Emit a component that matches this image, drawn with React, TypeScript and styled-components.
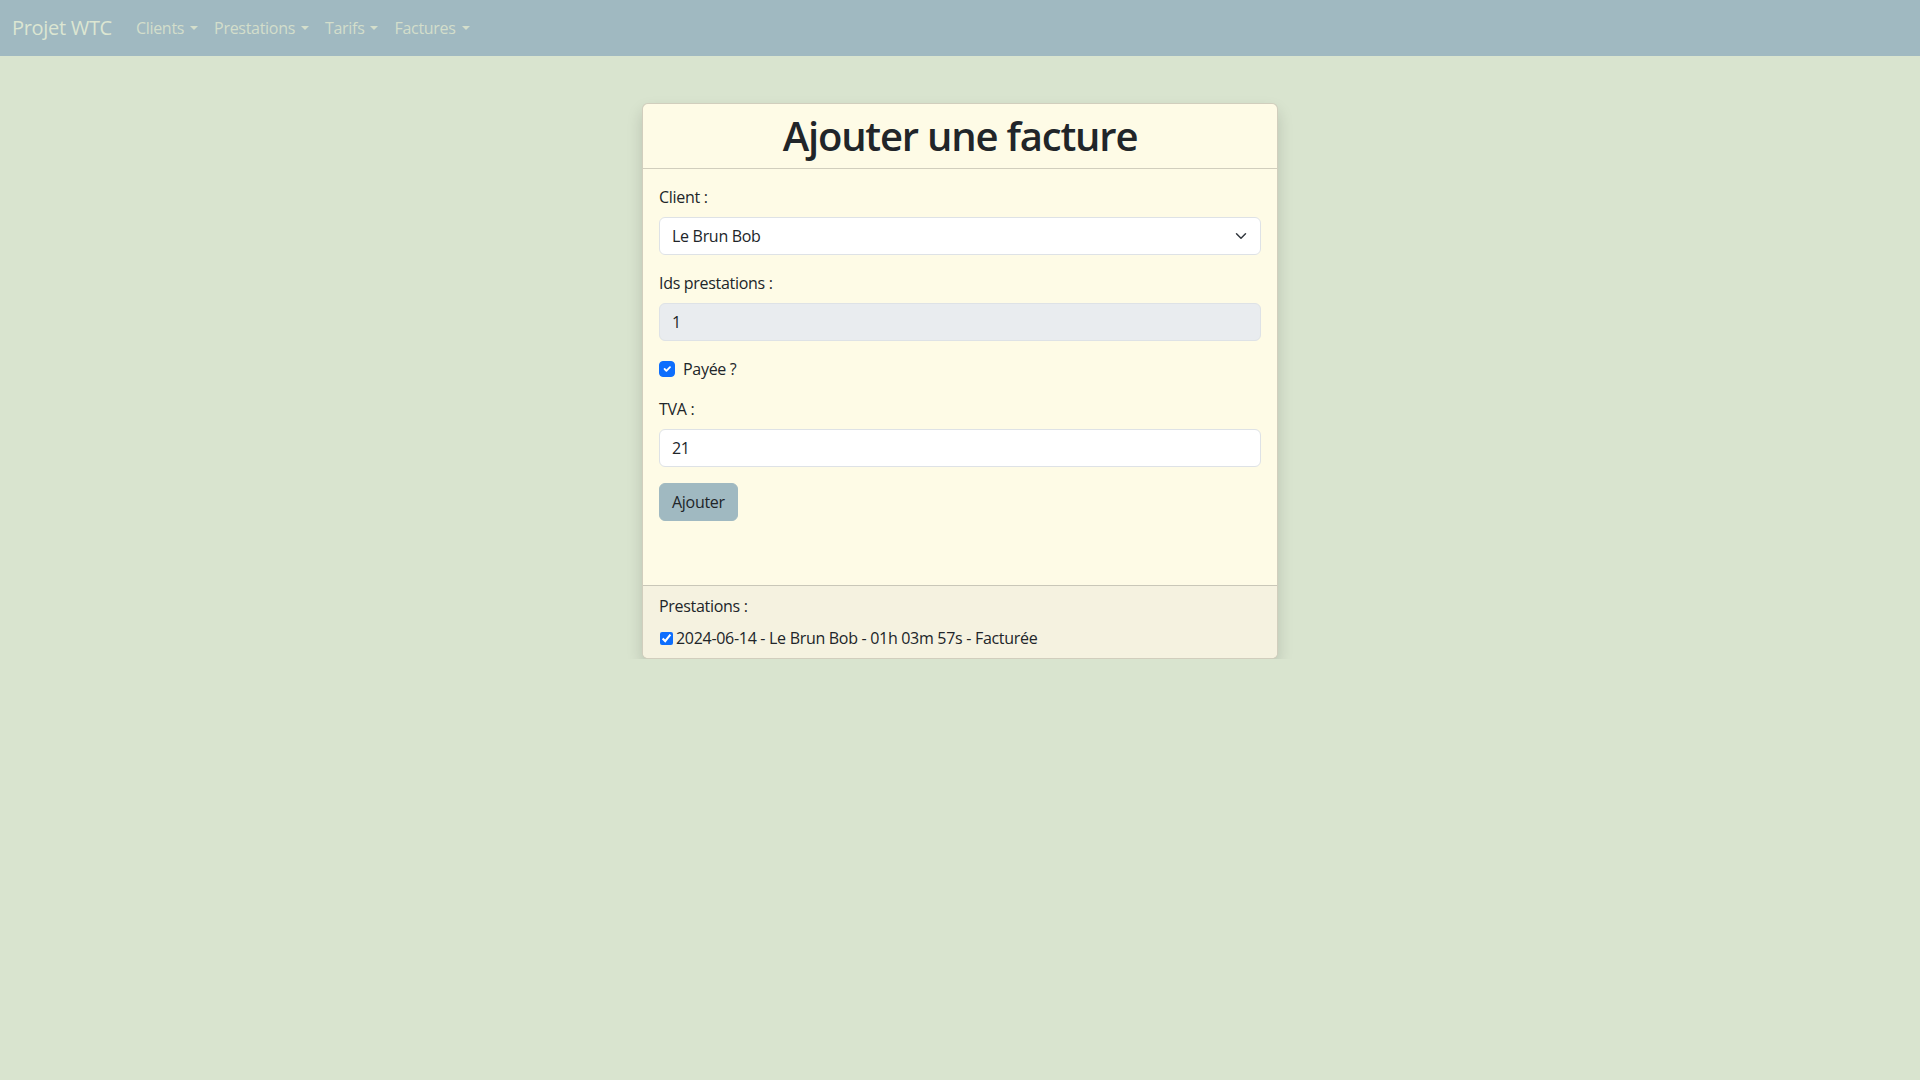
import React from "react";
import styled, { createGlobalStyle } from "styled-components";

const GlobalStyle = createGlobalStyle`
  html, body {
    margin: 0;
    padding: 0;
  }
  body {
    background: #d9e4cf;
    font-family: "Open Sans", "Liberation Sans", sans-serif;
    font-size: 16px;
    line-height: 24px;
    letter-spacing: -0.3px;
    color: #212529;
  }
  * { box-sizing: border-box; }
`;

const NavBar = styled.nav`
  display: flex;
  align-items: center;
  height: 56px;
  padding: 8px 12px;
  background: #a0b9c1;
`;

const Brand = styled.a`
  font-size: 20px;
  line-height: 30px;
  padding: 5px 0;
  margin-right: 16px;
  color: #dce6d2;
  text-decoration: none;
`;

const NavLinks = styled.ul`
  display: flex;
  list-style: none;
  margin: 0;
  padding: 0;
`;

const NavLink = styled.li`
  padding: 8px;
  color: #d3decb;
  cursor: pointer;
  &::after {
    content: "";
    display: inline-block;
    margin-left: 6px;
    vertical-align: 0.255em;
    border-top: 0.3em solid;
    border-right: 0.3em solid transparent;
    border-left: 0.3em solid transparent;
  }
`;

const Wrapper = styled.main`
  width: 636px;
  margin: 47px auto 0;
`;

const Card = styled.section`
  background: #fefbe6;
  border: 1px solid rgba(0, 0, 0, 0.175);
  border-radius: 6px;
  box-shadow: 0 8px 16px rgba(0, 0, 0, 0.15);
  overflow: hidden;
`;

const CardHeader = styled.header`
  padding: 8px 16px;
  border-bottom: 1px solid rgba(0, 0, 0, 0.175);
`;

const Title = styled.h1`
  margin: 0;
  font-size: 40px;
  line-height: 48px;
  font-weight: 600;
  letter-spacing: -1.2px;
  text-align: center;
`;

const CardBody = styled.form`
  display: flex;
  flex-direction: column;
  padding: 16px 16px 64px;
`;

const Field = styled.div`
  display: flex;
  flex-direction: column;
  margin-bottom: 16px;
`;

const Label = styled.label`
  margin-bottom: 8px;
`;

const inputBase = `
  height: 38px;
  width: 100%;
  padding: 6px 12px;
  font: inherit;
  font-size: 16px;
  line-height: 24px;
  letter-spacing: -0.3px;
  color: #212529;
  border: 1px solid #dee2e6;
  border-radius: 6px;
  outline: none;
`;

const Input = styled.input<{ $readOnly?: boolean }>`
  ${inputBase}
  background: ${(p) => (p.$readOnly ? "#e9ecef" : "#fff")};
`;

const SelectBox = styled.div`
  position: relative;
  display: flex;
`;

const Select = styled.select`
  ${inputBase}
  appearance: none;
  background: #fff;
  padding-right: 36px;
`;

const Chevron = styled.svg`
  position: absolute;
  right: 12px;
  top: 13px;
  width: 16px;
  height: 12px;
  pointer-events: none;
`;

const CheckRow = styled.div`
  display: flex;
  align-items: center;
  gap: 8px;
  min-height: 24px;
  margin-bottom: 16px;
`;

const CheckBox = styled.span`
  display: inline-flex;
  align-items: center;
  justify-content: center;
  width: 16px;
  height: 16px;
  border-radius: 4px;
  background: #0d6efd;
  border: 1px solid #0d6efd;
`;

const Button = styled.button`
  align-self: flex-start;
  height: 38px;
  padding: 6px 12px;
  font: inherit;
  font-size: 16px;
  line-height: 24px;
  letter-spacing: -0.3px;
  color: #212529;
  background: #a0b9c1;
  border: 1px solid #a0b9c1;
  border-radius: 6px;
  cursor: pointer;
`;

const CardFooter = styled.footer`
  display: flex;
  flex-direction: column;
  gap: 8px;
  padding: 8px 16px;
  background: #f5f2e0;
  border-top: 1px solid rgba(0, 0, 0, 0.175);
`;

const FooterItem = styled.label`
  display: flex;
  align-items: center;
`;

const SmallCheck = styled.input`
  width: 13px;
  height: 13px;
  margin: 0 3px 0 1px;
  accent-color: #0d6efd;
`;

export default function App() {
  return (
    <>
      <GlobalStyle />
      <NavBar>
        <Brand href="#">Projet WTC</Brand>
        <NavLinks>
          <NavLink>Clients</NavLink>
          <NavLink>Prestations</NavLink>
          <NavLink>Tarifs</NavLink>
          <NavLink>Factures</NavLink>
        </NavLinks>
      </NavBar>
      <Wrapper>
        <Card>
          <CardHeader>
            <Title>Ajouter une facture</Title>
          </CardHeader>
          <CardBody onSubmit={(e) => e.preventDefault()}>
            <Field>
              <Label>Client :</Label>
              <SelectBox>
                <Select defaultValue="bob">
                  <option value="bob">Le Brun Bob</option>
                </Select>
                <Chevron viewBox="0 0 16 16">
                  <path
                    d="m2 5 6 6 6-6"
                    fill="none"
                    stroke="#343a40"
                    strokeWidth="2"
                    strokeLinecap="round"
                    strokeLinejoin="round"
                  />
                </Chevron>
              </SelectBox>
            </Field>
            <Field>
              <Label>Ids prestations :</Label>
              <Input $readOnly readOnly value="1" />
            </Field>
            <CheckRow>
              <CheckBox>
                <svg width="12" height="12" viewBox="0 0 20 20">
                  <path
                    d="m6 10 3 3 6-6"
                    fill="none"
                    stroke="#fff"
                    strokeWidth="3"
                    strokeLinecap="round"
                    strokeLinejoin="round"
                  />
                </svg>
              </CheckBox>
              <span>Payée ?</span>
            </CheckRow>
            <Field>
              <Label>TVA :</Label>
              <Input defaultValue="21" />
            </Field>
            <Button type="submit">Ajouter</Button>
          </CardBody>
          <CardFooter>
            <span>Prestations :</span>
            <FooterItem>
              <SmallCheck type="checkbox" defaultChecked />
              2024-06-14 - Le Brun Bob - 01h 03m 57s - Facturée
            </FooterItem>
          </CardFooter>
        </Card>
      </Wrapper>
    </>
  );
}
